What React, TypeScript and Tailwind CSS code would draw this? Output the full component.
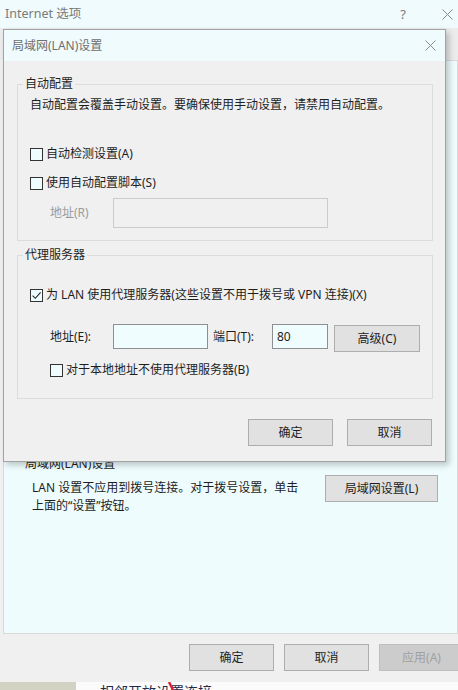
import React from 'react'

// Windows 10 "Internet 选项" window with the LAN settings dialog open on top of it.

function Box({ checked }: { checked?: boolean }) {
  return (
    <span className="flex h-[13px] w-[13px] shrink-0 items-center justify-center border border-[#333333] bg-[#effcfd]">
      {checked && (
        <svg width="11" height="11" viewBox="0 0 11 11">
          <path d="M1.6 5.6 L4.3 8.3 L9.6 2.3" fill="none" stroke="#222222" strokeWidth="1.1" />
        </svg>
      )}
    </span>
  )
}

function Check({ label, checked, className = '' }: { label: string; checked?: boolean; className?: string }) {
  return (
    <label className={`flex h-[16px] items-center gap-[3px] whitespace-nowrap ${className}`}>
      <Box checked={checked} />
      <span>{label}</span>
    </label>
  )
}

function Btn({ children, className = '' }: { children: React.ReactNode; className?: string }) {
  return (
    <button className={`flex h-[27px] w-[85px] shrink-0 items-center justify-center border border-[#adadad] bg-[#e1e1e1] text-[12px] text-[#1e1e1e] ${className}`}>
      {children}
    </button>
  )
}

function Cross({ color }: { color: string }) {
  return (
    <svg width="11" height="11" viewBox="0 0 11 11">
      <path d="M0.5 0.5 L10.5 10.5 M10.5 0.5 L0.5 10.5" stroke={color} strokeWidth="1" fill="none" />
    </svg>
  )
}

function LanDialog() {
  return (
    <div className="absolute left-[3px] top-[29px] flex h-[433px] w-[443px] flex-col border border-[#a3a3a3] bg-[#f0f0f0] shadow-[3px_3px_6px_rgba(0,0,0,0.22)]">
      {/* title bar */}
      <div className="flex h-[31px] shrink-0 items-center bg-[#effbfd] pl-[8px]">
        <span className="text-[#6f6f6f]">局域网(LAN)设置</span>
        <span className="ml-auto flex w-[30px] justify-center">
          <Cross color="#8a8a8a" />
        </span>
      </div>

      <div className="flex flex-col">
        {/* 自动配置 */}
        <fieldset className="ml-[13px] mt-[15px] w-[416px] border border-[#dcdcdc] pb-[12px]">
          <legend className="ml-[5px] px-[2px] leading-[16px]">自动配置</legend>
          <div className="flex flex-col pl-[12px]">
            <p className="mt-[5px] whitespace-nowrap">自动配置会覆盖手动设置。要确保使用手动设置，请禁用自动配置。</p>
            <Check className="mt-[33px]" label="自动检测设置(A)" />
            <Check className="mt-[13px]" label="使用自动配置脚本(S)" />
            <div className="ml-[20px] mt-[7px] flex items-center">
              <span className="w-[63px] text-[#9b9b9b]">地址(R)</span>
              <div className="h-[30px] w-[215px] border border-[#cccccc]" />
            </div>
          </div>
        </fieldset>

        {/* 代理服务器 */}
        <fieldset className="ml-[13px] mt-[6px] w-[416px] border border-[#dcdcdc] pb-[20px]">
          <legend className="ml-[5px] px-[2px] leading-[16px]">代理服务器</legend>
          <div className="flex flex-col pl-[12px]">
            <Check className="mt-[24px]" checked label="为 LAN 使用代理服务器(这些设置不用于拨号或 VPN 连接)(X)" />
            <div className="ml-[20px] mt-[21px] flex items-start">
              <span className="h-[25px] w-[63px] leading-[25px]">地址(E):</span>
              <input
                type="text"
                className="h-[25px] w-[95px] border border-[#8f8f8f] bg-[#f0fdff] px-[4px] text-[12px] outline-none"
              />
              <span className="ml-[5px] h-[25px] w-[59px] whitespace-nowrap leading-[25px]">端口(T):</span>
              <input
                type="text"
                defaultValue="80"
                className="h-[25px] w-[56px] border border-[#8f8f8f] bg-[#f0fdff] px-[4px] text-[12px] outline-none"
              />
              <Btn className="ml-[6px] mt-[1px] w-[86px]">高级(C)</Btn>
            </div>
            <Check className="ml-[20px] mt-[10px]" label="对于本地地址不使用代理服务器(B)" />
          </div>
        </fieldset>

        <div className="mt-[20px] flex justify-end gap-[14px] pr-[13px]">
          <Btn>确定</Btn>
          <Btn>取消</Btn>
        </div>
      </div>
    </div>
  )
}

export default function App() {
  return (
    <div className="relative h-[690px] w-[458px] overflow-hidden bg-[#f0f0f0] font-['Noto_Sans','Noto_Sans_CJK_SC',sans-serif] text-[12px] leading-[16px] text-[#1e1e1e]">
      {/* Internet 选项 title bar */}
      <div className="flex h-[28px] items-center bg-[#effbfd] pl-[5px]">
        <span className="text-[12.5px] text-[#7a7a7a]">Internet 选项</span>
        <span className="ml-auto flex w-[22px] justify-center text-[13px] text-[#7a7a7a]">?</span>
        <span className="ml-[22px] flex w-[22px] justify-center">
          <Cross color="#8a8a8a" />
        </span>
      </div>

      {/* tab strip (hidden behind the dialog) */}
      <div className="h-[32px] bg-[#ececec]" />

      {/* 连接 tab page */}
      <div className="ml-[3px] flex h-[574px] flex-col border border-[#d9d9d9] bg-[#eefcfd]">
        <span className="ml-[21px] mt-[395px]">局域网(LAN)设置</span>
        <div className="mt-[3px] flex items-start">
          <p className="ml-[28px] mt-[4px] w-[293px] whitespace-nowrap leading-[18px]">
            LAN 设置不应用到拨号连接。对于拨号设置，单击
            <br />
            上面的“设置”按钮。
          </p>
          <Btn className="w-[113px]">局域网设置(L)</Btn>
        </div>
      </div>

      {/* window buttons */}
      <div className="flex h-[48px] gap-[10px] pl-[189px] pt-[10px]">
        <Btn>确定</Btn>
        <Btn>取消</Btn>
        <button className="flex h-[27px] w-[85px] shrink-0 items-center justify-center border border-[#bfbfbf] bg-[#cccccc] text-[#a0a0a0]">
          应用(A)
        </button>
      </div>

      {/* page behind the window */}
      <div className="flex h-[8px] overflow-hidden">
        <div className="w-[76px] bg-[#d3d3c4]" />
        <div className="relative flex-1 bg-[#fbfbfb]">
          <span className="ml-[24px] mt-[2px] block whitespace-nowrap text-[14px] leading-[16px] text-[#1d2a4a]">相邻开放设置连接</span>
          <svg className="absolute left-[92px] top-0" width="8" height="8" viewBox="0 0 8 8">
            <path d="M1 0 L5 8" stroke="#e0213a" strokeWidth="2.5" />
          </svg>
        </div>
      </div>

      <LanDialog />
    </div>
  )
}
